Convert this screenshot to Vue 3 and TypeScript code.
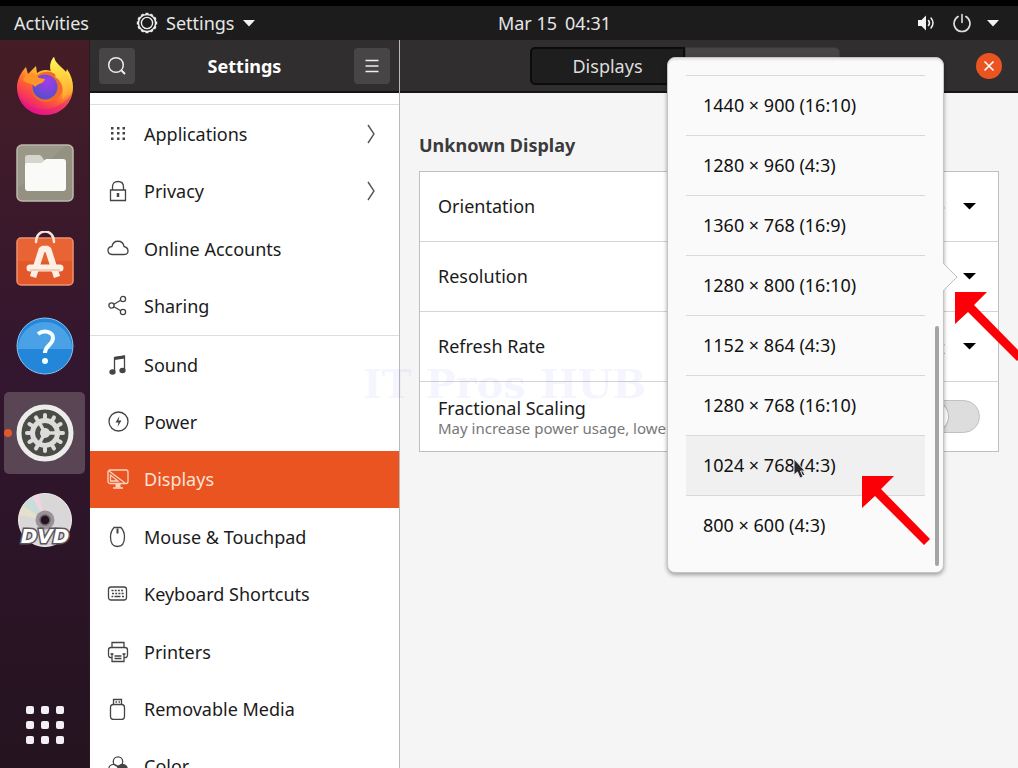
<script setup lang="ts">
import { ref } from 'vue'

interface Panel {
  id: string
  label: string
  sub?: boolean
}

const upperPanels: Panel[] = [
  { id: 'applications', label: 'Applications', sub: true },
  { id: 'privacy', label: 'Privacy', sub: true },
  { id: 'accounts', label: 'Online Accounts' },
  { id: 'sharing', label: 'Sharing' },
]
const lowerPanels: Panel[] = [
  { id: 'sound', label: 'Sound' },
  { id: 'power', label: 'Power' },
  { id: 'displays', label: 'Displays' },
  { id: 'mouse', label: 'Mouse & Touchpad' },
  { id: 'keyboard', label: 'Keyboard Shortcuts' },
  { id: 'printers', label: 'Printers' },
  { id: 'media', label: 'Removable Media' },
  { id: 'color', label: 'Color' },
]
const groups: Panel[][] = [upperPanels, lowerPanels]

const selects = [
  { id: 'orientation', label: 'Orientation', value: 'Landscape' },
  { id: 'resolution', label: 'Resolution', value: '1440 × 900 (16:10)' },
  { id: 'refresh', label: 'Refresh Rate', value: '60.00 Hz' },
]

const resolutions: string[] = [
  '1440 × 900 (16:10)',
  '1280 × 960 (4:3)',
  '1360 × 768 (16:9)',
  '1280 × 800 (16:10)',
  '1152 × 864 (4:3)',
  '1280 × 768 (16:10)',
  '1024 × 768 (4:3)',
  '800 × 600 (4:3)',
]

const activePanel = ref('displays')
const hovered = ref('1024 × 768 (4:3)')
const fractional = ref(false)
const teeth = Array.from({ length: 12 }, (_, i) => i * 30)
</script>

<template>
  <div class="desktop">
    <header class="topbar">
      <div class="topbar-side">
        <button class="bar-btn">Activities</button>
        <button class="bar-btn app-menu">
          <svg width="22" height="22" viewBox="-11 -11 22 22" fill="none" stroke="#eee">
            <circle r="8.6" stroke-width="1.5" />
            <circle r="5.6" stroke-width="1.4" />
            <path v-for="a in teeth" :key="a" d="M-1.5-9.4h3" :transform="`rotate(${a})`" stroke-width="1.6" />
          </svg>
          <span>Settings</span>
          <svg width="12" height="7" viewBox="0 0 12 7"><path d="M0 0h12L6 6.500z" fill="#f2f2f2" /></svg>
        </button>
      </div>
      <button class="bar-btn clock"><span>Mar 15</span><span>04:31</span></button>
      <div class="topbar-side end">
        <button class="bar-btn tray" aria-label="System menu">
          <svg width="20" height="18" viewBox="0 0 20 18" fill="none" stroke="#eee" stroke-linecap="round">
            <path d="M1 6h3.500L9 1.500v15L4.500 12H1z" fill="#f4f4f4" stroke="none" />
            <path d="M11.500 6.500q2 2.500 0 5" stroke-width="1.600" />
            <path d="M14 4q4 5 0 10" stroke-width="1.500" />
          </svg>
          <svg width="20" height="20" viewBox="0 0 20 20" fill="none" stroke="#ddd" stroke-width="1.600" stroke-linecap="round">
            <path d="M6.200 3.500a8 8 0 1 0 7.600 0M10 1.500v8" />
          </svg>
          <svg width="12" height="7" viewBox="0 0 12 7"><path d="M0 0h12L6 6.500z" fill="#f2f2f2" /></svg>
        </button>
      </div>
    </header>

    <div class="workspace">
      <nav class="dock" aria-label="Dock">
        <div class="dock-apps">
          <button class="dock-btn" aria-label="Firefox">
            <svg width="60" height="60" viewBox="0 0 60 60">
              <defs>
                <linearGradient id="fx" x1="0.8" y1="0.1" x2="0.3" y2="1">
                  <stop offset="0" stop-color="#fff04a" />
                  <stop offset="0.35" stop-color="#ffb02c" />
                  <stop offset="0.62" stop-color="#ff5a38" />
                  <stop offset="1" stop-color="#e80f84" />
                </linearGradient>
                <radialGradient id="fxg" cx="0.6" cy="0.3" r="0.8">
                  <stop offset="0" stop-color="#a13de8" />
                  <stop offset="1" stop-color="#4c50c8" />
                </radialGradient>
                <linearGradient id="fxy" x1="0.5" y1="0" x2="0.7" y2="1">
                  <stop offset="0" stop-color="#fff34e" />
                  <stop offset="1" stop-color="#ffa632" />
                </linearGradient>
              </defs>
              <path d="M2 31C2 24 6 16 11 11l2 7 8-8 1 7c4-3 9-4 14-2C35 9 36 4 39 1c1 7 8 10 12 15l1-3c4 6 6 12 6 18 0 16-12 28-28 28S2 47 2 31z" fill="url(#fx)" />
              <path d="M30 16c11-2 19 6 18 16-1 9-9 15-18 14-8-1-14-7-13-14 0-9 5-15 13-16z" fill="#f36b2a" />
              <circle cx="30" cy="31" r="12.500" fill="url(#fxg)" />
              <path d="M36 16C34 9 36 4 39 1c1 7 9 10 13 17 5 9 2 20-5 26 3-12-1-20-7-23 2-2-1-4-4-5z" fill="url(#fxy)" />
              <path d="M11 19c4-3 9-2 13 3l6 1c-1 5-7 4-10 8-3-5-9-3-12-7z" fill="#ff9526" />
              <path d="M3 37c5 12 17 17 28 16 12-1 22-8 26-17-2 14-13 23-27 23C16 59 5 49 3 37z" fill="#d9109a" opacity="0.400" />
            </svg>
          </button>
          <button class="dock-btn" aria-label="Files">
            <svg width="58" height="58" viewBox="0 0 58 58">
              <rect x="1" y="1" width="56" height="56" rx="5" fill="#949082" stroke="#bcb9ad" stroke-width="1.500" />
              <path d="M2 6a4 4 0 0 1 4-4h43L2 44z" fill="#a09c8e" opacity="0.600" />
              <path d="M9 25V14q0-3 3-3h11q2 0 3 2l2 3h15v12z" fill="#d7d5cb" />
              <path d="M9 21q0-2 2-2h13q2 0 3-1l3-3h17q3 0 3 3v26q0 3-3 3H12q-3 0-3-3z" fill="#fafaf8" />
            </svg>
          </button>
          <button class="dock-btn" aria-label="Ubuntu Software">
            <svg width="58" height="58" viewBox="0 0 58 58" fill="none">
              <rect x="1" y="7" width="56" height="47" rx="4" fill="#e2582b" stroke="#ee9270" stroke-width="1.500" />
              <path d="M2 8h54v22H2z" fill="#ec6a39" opacity="0.700" />
              <path d="M20 11c0-14 18-14 18 0" stroke="#f6e4d6" stroke-width="2.500" stroke-linecap="round" />
              <path d="M17 46 26 18h6l9 28" stroke="#fcf0e4" stroke-width="6.500" stroke-linejoin="bevel" />
              <path d="M14 37h30" stroke="#fcf0e4" stroke-width="7" stroke-linecap="round" />
              <path d="M14 39h30" stroke="#e8a98d" stroke-width="1" />
            </svg>
          </button>
          <button class="dock-btn" aria-label="Help">
            <svg width="58" height="58" viewBox="0 0 58 58" fill="none">
              <circle cx="29" cy="29" r="28" fill="#2386d8" stroke="#8ac4f2" stroke-width="1" />
              <path d="M2 32a27 27 0 0 1 54 0z" fill="#4ba1e5" />
              <path d="M22 17c6-5 15-2 15 4 0 7-8 7-8 15" stroke="#f4ffff" stroke-width="4" />
              <circle cx="29" cy="44" r="3" fill="#f4ffff" />
            </svg>
          </button>
          <button class="dock-btn running" aria-label="Settings">
            <svg width="58" height="58" viewBox="-29 -29 58 58" fill="none">
              <circle r="26" fill="#4b4b48" stroke="#ececea" stroke-width="5" />
              <path v-for="a in teeth" :key="a" d="M0-18V-14" :transform="`rotate(${a})`" stroke="#dcdcda" stroke-width="4" stroke-linecap="round" />
              <circle r="12.500" stroke="#dcdcda" stroke-width="5" />
              <circle r="5" fill="#dcdcda" />
              <path d="M0 0 12 0M0 0-6-11M0 0-6 11" stroke="#dcdcda" stroke-width="3.500" />
            </svg>
          </button>
          <button class="dock-btn" aria-label="DVD drive">
            <svg width="58" height="58" viewBox="0 0 58 58">
              <circle cx="29" cy="29" r="26.500" fill="#d9d7d8" stroke="#f1eeee" />
              <path d="M29 29 7 15a26 26 0 0 1 9-9z" fill="#c9dedb" />
              <path d="M29 29 16 6a26 26 0 0 1 7-3z" fill="#ecd6df" />
              <path d="M29 29 3 24a26 26 0 0 1 4-9z" fill="#e5e0c9" />
              <circle cx="29" cy="29" r="9.500" fill="#9a9297" />
              <circle cx="29" cy="29" r="5" fill="#251322" stroke="#6b636a" stroke-width="1.500" />
              <text x="29" y="52" text-anchor="middle" class="dvd">DVD</text>
            </svg>
          </button>
        </div>
        <button class="apps-btn" aria-label="Show Applications">
          <span v-for="n in 9" :key="n" class="apps-dot"></span>
        </button>
      </nav>

      <div class="window">
        <aside class="sidebar">
          <div class="side-head">
            <button class="head-btn" aria-label="Search">
              <svg width="20" height="20" viewBox="0 0 20 20" fill="none" stroke="#eee" stroke-width="1.500">
                <circle cx="9" cy="9" r="7.300" /><path d="m14.500 14.500 3.500 3.500" stroke-width="2" />
              </svg>
            </button>
            <h1>Settings</h1>
            <button class="head-btn" aria-label="Menu">
              <svg width="14" height="14" viewBox="0 0 14 14" stroke="#eee" stroke-width="1.500"><path d="M0.500 1.500h13M0.500 7h13M0.500 12.500h13" /></svg>
            </button>
          </div>
          <div class="side-scroll">
            <div v-for="(group, g) in groups" :key="g" class="group">
              <button
                v-for="p in group"
                :key="p.id"
                class="panel"
                :class="{ active: p.id === activePanel }"
                @click="activePanel = p.id"
              >
                <svg class="panel-icon" width="22" height="22" viewBox="0 0 22 22" fill="none" stroke="currentColor" stroke-width="1.300">
                  <g v-if="p.id === 'applications'" fill="currentColor" stroke="none">
                    <path d="M4 4h2.500v2.500H4zM10 4h2.500v2.500H10zM15.500 4H18v2.500h-2.500zM4 9h2.500v2.500H4zM10 9h2.500v2.500H10zM15.500 9H18v2.500h-2.500zM4 14.500h2.500V17H4zM10 14.500h2.500V17H10zM15.500 14.500H18V17h-2.500z" />
                  </g>
                  <g v-else-if="p.id === 'privacy'">
                    <path d="M3.500 10h15v10.500h-15zM5.500 10V7q0-5.500 5.500-5.500T16.500 7v3" /><path d="M11 13v4" stroke-width="2.500" />
                  </g>
                  <path v-else-if="p.id === 'accounts'" d="M5 16.500q-4-.5-4-4t4-4c1-7 11-7 12 0q4 1 4 4.500t-4 3.500z" />
                  <g v-else-if="p.id === 'sharing'">
                    <circle cx="4.500" cy="10.500" r="2.600" /><circle cx="16" cy="4" r="2.600" /><circle cx="16" cy="17" r="2.600" /><path d="m7 9.300 6.700-4M7 11.800l6.700 4" />
                  </g>
                  <g v-else-if="p.id === 'sound'">
                    <path d="M7.500 17.500V3.500l10-1.500v14" /><path d="M7.500 4.500l10-1.500" stroke-width="3" /><ellipse cx="5.500" cy="18" rx="2.500" ry="2" fill="currentColor" /><ellipse cx="15.500" cy="16.500" rx="2.500" ry="2" fill="currentColor" />
                  </g>
                  <g v-else-if="p.id === 'power'">
                    <circle cx="11.500" cy="10.500" r="9.500" /><path d="M12.500 5 8.500 11.500h3L10.500 16l4-6.500h-3z" fill="currentColor" stroke="none" />
                  </g>
                  <g v-else-if="p.id === 'displays'">
                    <rect x="1" y="2" width="20" height="13.500" rx="2" /><path d="m2 3 16 12M3.500 7v6H11z" /><path d="M11 15.500v4" stroke-width="5" /><path d="M6 20h10" stroke-width="1.600" />
                  </g>
                  <g v-else-if="p.id === 'mouse'">
                    <path d="M7 1.500h7q3.500 4 3.500 9.500 0 9.500-7 9.500t-7-9.500Q3.500 5.500 7 1.500z" /><path d="M10.500 2.500v5" stroke-width="2" />
                  </g>
                  <g v-else-if="p.id === 'keyboard'">
                    <rect x="1.500" y="4" width="18" height="13" rx="2.500" /><path d="M4.500 7.500h12.500M5 10.500h12" stroke-dasharray="2 1.200" /><path d="M4.500 13.500h1.800M7.500 13.500h6M15 13.500h2" />
                  </g>
                  <g v-else-if="p.id === 'printers'">
                    <path d="M5 6.500v-5h12v5M5 16.500Q1.500 17 1.500 14V9q0-2.500 2.500-2.500h14q2.500 0 2.500 2.500v5q0 3-3.500 2.500M5 12.500v8h12v-8M7.500 15h7M7.500 17.500h7" /><path d="M3.500 13h15" stroke-dasharray="3 9" />
                  </g>
                  <g v-else-if="p.id === 'media'">
                    <rect x="3.500" y="6.500" width="14" height="15" rx="3" /><path d="M6.500 6V1.500h8V6M8.500 4h1.500M11.500 4H13" />
                  </g>
                  <g v-else>
                    <circle cx="11" cy="6.500" r="4.700" /><circle cx="6.500" cy="14" r="4.700" /><circle cx="15.500" cy="14" r="4.700" fill="currentColor" />
                  </g>
                </svg>
                <span>{{ p.label }}</span>
                <svg v-if="p.sub" class="chev" width="8" height="20" viewBox="0 0 8 20" fill="none" stroke="#555" stroke-width="1.400"><path d="m1 1 6 9-6 9" /></svg>
              </button>
            </div>
          </div>
        </aside>

        <main class="content">
          <div class="content-head">
            <div class="tabs">
              <button class="tab selected">Displays</button>
              <button class="tab">Night Light</button>
            </div>
            <button class="close" aria-label="Close">
              <svg width="12" height="12" viewBox="0 0 12 12" stroke="#fff" stroke-width="1.600"><path d="m1.500 1.500 9 9M10.500 1.500l-9 9" /></svg>
            </button>
          </div>
          <section class="display">
            <h2>Unknown Display</h2>
            <div class="card">
              <div v-for="s in selects" :key="s.id" class="row">
                <label :for="s.id">{{ s.label }}</label>
                <div class="select-box">
                  <select :id="s.id"><option>{{ s.value }}</option></select>
                  <svg width="13" height="7" viewBox="0 0 13 7"><path d="M0 0h13L6.500 6.500z" fill="#000" /></svg>
                </div>
              </div>
              <div class="row">
                <label for="fractional">
                  <span class="row-title">Fractional Scaling</span>
                  <small>May increase power usage, lower speed</small>
                </label>
                <input id="fractional" v-model="fractional" class="switch" type="checkbox" />
              </div>
            </div>
          </section>
        </main>
      </div>
    </div>

    <div class="watermark">IT Pros HUB</div>

    <div class="popover">
      <svg class="pointer" width="16" height="28" viewBox="0 0 16 28"><path d="M0 0h1l14 14L1 28H0z" fill="#fafafa" /><path d="m1 0 14 14L1 28" fill="none" stroke="#bdbdbd" /></svg>
      <ul>
        <li v-for="r in resolutions" :key="r">
          <button class="option" :class="{ hover: r === hovered }" @mouseenter="hovered = r">{{ r }}</button>
        </li>
      </ul>
      <div class="scrollbar"></div>
    </div>

    <svg class="arrow arrow-caret" width="69" height="70" viewBox="0 0 69 70"><path d="M0 0h32L19 13l49 50-6 6L13 20 0 32z" fill="#fb0007" /></svg>
    <svg class="arrow arrow-option" width="69" height="70" viewBox="0 0 69 70"><path d="M0 0h32L19 13l49 50-6 6L13 20 0 32z" fill="#fb0007" /></svg>
    <svg class="cursor" width="14" height="22" viewBox="0 0 14 22"><path d="M1 1v16l3.500-3L7 20l3-1.300L7.500 13H12z" fill="#2a2a2a" stroke="#e6e6e6" /></svg>
  </div>
</template>

<style>
body {
  margin: 0;
  overflow: hidden;
}
</style>

<style scoped>
.desktop {
  position: relative;
  display: flex;
  flex-direction: column;
  height: 100vh;
  overflow: hidden;
  background: #000;
  color: #1b1b1b;
  font: 18px/24px "Noto Sans", "Open Sans", sans-serif;
}
button,
select {
  margin: 0;
  padding: 0;
  border: 0;
  background: none;
  color: inherit;
  font: inherit;
}
svg {
  display: block;
  flex: none;
}
.topbar {
  display: flex;
  align-items: center;
  flex: none;
  height: 34px;
  margin-top: 6px;
  padding: 0 19px 0 14px;
  background: #1c1c1c;
  color: #e6e6e6;
}
.topbar-side {
  display: flex;
  flex: 1;
  gap: 47px;
}
.end {
  justify-content: flex-end;
}
.bar-btn {
  display: flex;
  align-items: center;
  gap: 8px;
}
.clock {
  margin-left: 96px;
}
.tray {
  gap: 15px;
}
.workspace {
  display: flex;
  flex: 1;
  min-height: 0;
}
.dock {
  display: flex;
  flex-direction: column;
  justify-content: space-between;
  flex: none;
  width: 90px;
  box-sizing: border-box;
  padding: 5px 4px 24px;
  background: linear-gradient(#451d26, #33162f 45%, #24131f);
  border-right: 1px solid #2a1a26;
}
.dock-apps {
  display: flex;
  flex-direction: column;
  justify-content: space-between;
  height: 516px;
}
.dock-btn {
  position: relative;
  display: grid;
  place-items: center;
  height: 82px;
  border-radius: 5px;
}
.running {
  background: #594554;
}
.running::before {
  content: "";
  position: absolute;
  left: 0;
  width: 8px;
  height: 8px;
  border-radius: 50%;
  background: #e4572b;
}
.dvd {
  font: italic bold 20px "DejaVu Sans", sans-serif;
  fill: #fff;
  stroke: #5b555b;
  stroke-width: 3px;
  paint-order: stroke;
}
.apps-btn {
  display: grid;
  grid-template-columns: repeat(3, 8px);
  gap: 7px;
  justify-content: center;
}
.apps-dot {
  height: 8px;
  border-radius: 2px;
  background: #f3eff2;
}
.window {
  display: flex;
  flex: 1;
  min-width: 0;
}
.sidebar {
  display: flex;
  flex-direction: column;
  flex: none;
  width: 309px;
  border-right: 1px solid #bcb8b8;
  background: #fff;
}
.side-head,
.content-head {
  display: flex;
  align-items: center;
  flex: none;
  height: 53px;
  box-sizing: border-box;
  border-bottom: 2px solid #151515;
  background: #302e2f;
  color: #fff;
}
.side-head {
  justify-content: space-between;
  padding: 0 9px;
}
h1,
h2 {
  margin: 0;
  font-size: 18px;
  line-height: 24px;
}
.head-btn {
  display: grid;
  place-items: center;
  width: 36px;
  height: 36px;
  border-radius: 4px;
  background: #474546;
}
.side-scroll {
  flex: 1;
  min-height: 0;
  overflow: hidden;
  padding-top: 11px;
}
.group {
  display: grid;
  grid-auto-rows: 1fr;
  height: 230px;
  border-top: 1px solid #dedede;
}
.group + .group {
  height: 459px;
}
.panel {
  display: flex;
  align-items: center;
  gap: 15px;
  padding: 0 24px 0 17px;
  text-align: left;
}
.panel-icon {
  color: #444;
}
.chev {
  margin-left: auto;
}
.active {
  background: #e95420;
  color: #fbe3d8;
}
.active .panel-icon {
  color: #fbd3c2;
}
.content {
  display: flex;
  flex-direction: column;
  flex: 1;
  min-width: 0;
  background: #f6f5f5;
}
.content-head {
  padding-right: 16px;
  gap: 6px;
}
.tabs {
  display: flex;
  justify-content: center;
  flex: 1;
}
.tab {
  box-sizing: border-box;
  width: 155px;
  height: 38px;
  border: 1px solid #3a3839;
  border-radius: 0 5px 5px 0;
  background: #474546;
  color: #ddd;
}
.tab.selected {
  border: 2px solid #0c0c0c;
  border-radius: 5px 0 0 5px;
  background: #1f1e1f;
}
.close {
  display: grid;
  place-items: center;
  width: 26px;
  height: 26px;
  border-radius: 50%;
  background: #e95420;
}
.display {
  padding: 40px 19px 0;
}
h2 {
  color: #3b3b3b;
}
.card {
  margin-top: 14px;
  border: 1px solid #c0bebe;
  background: #fff;
}
.row {
  display: flex;
  align-items: center;
  justify-content: space-between;
  height: 69px;
  padding: 0 18px;
}
.row + .row {
  border-top: 1px solid #d5d3d3;
}
.row label {
  padding-bottom: 2px;
}
.row-title,
small {
  display: block;
}
small {
  color: #777;
  font-size: 15px;
  line-height: 16px;
}
.select-box {
  display: flex;
  align-items: center;
  gap: 18px;
  padding-right: 4px;
}
select {
  appearance: none;
  color: #2f5f80;
  text-align: right;
}
.switch {
  appearance: none;
  display: flex;
  width: 64px;
  height: 33px;
  margin: 0;
  border: 1px solid #c2c0c0;
  border-radius: 17px;
  background: #dedddd;
}
.switch::before {
  content: "";
  width: 31px;
  border-radius: 50%;
  background: #fff;
  box-shadow: 0 0 0 1px #b5b3b3;
}
.switch:checked {
  justify-content: flex-end;
}
.popover {
  position: absolute;
  top: 57px;
  right: 74px;
  width: 277px;
  height: 516px;
  box-sizing: border-box;
  padding: 17px 18px;
  border: 1px solid #c4c4c4;
  border-radius: 8px;
  background: #fafafa;
  box-shadow: 0 2px 4px rgba(0, 0, 0, 0.35), inset 0 3px 2px -1px #e4e4e4;
}
.popover ul {
  margin: 0;
  padding: 0;
  list-style: none;
}
.option {
  display: block;
  width: 100%;
  height: 60px;
  padding: 0 17px 2px;
  border-top: 1px solid #d9d9d9;
  color: #111;
  text-align: left;
}
.option.hover {
  background: #f0f0f0;
}
.pointer {
  position: absolute;
  top: 205px;
  right: -15px;
}
.scrollbar {
  position: absolute;
  right: 4px;
  bottom: 6px;
  width: 4px;
  height: 240px;
  border-radius: 2px;
  background: #a5a5a5;
}
.watermark {
  position: absolute;
  top: 361px;
  left: 363px;
  color: rgba(90, 100, 240, 0.08);
  font: bold 40px/46px "DejaVu Serif", serif;
  white-space: nowrap;
  pointer-events: none;
}
.arrow,
.cursor {
  position: absolute;
  pointer-events: none;
}
.arrow-caret {
  top: 292px;
  left: 955px;
}
.arrow-option {
  top: 476px;
  left: 862px;
}
.cursor {
  top: 458px;
  left: 793px;
}
</style>
